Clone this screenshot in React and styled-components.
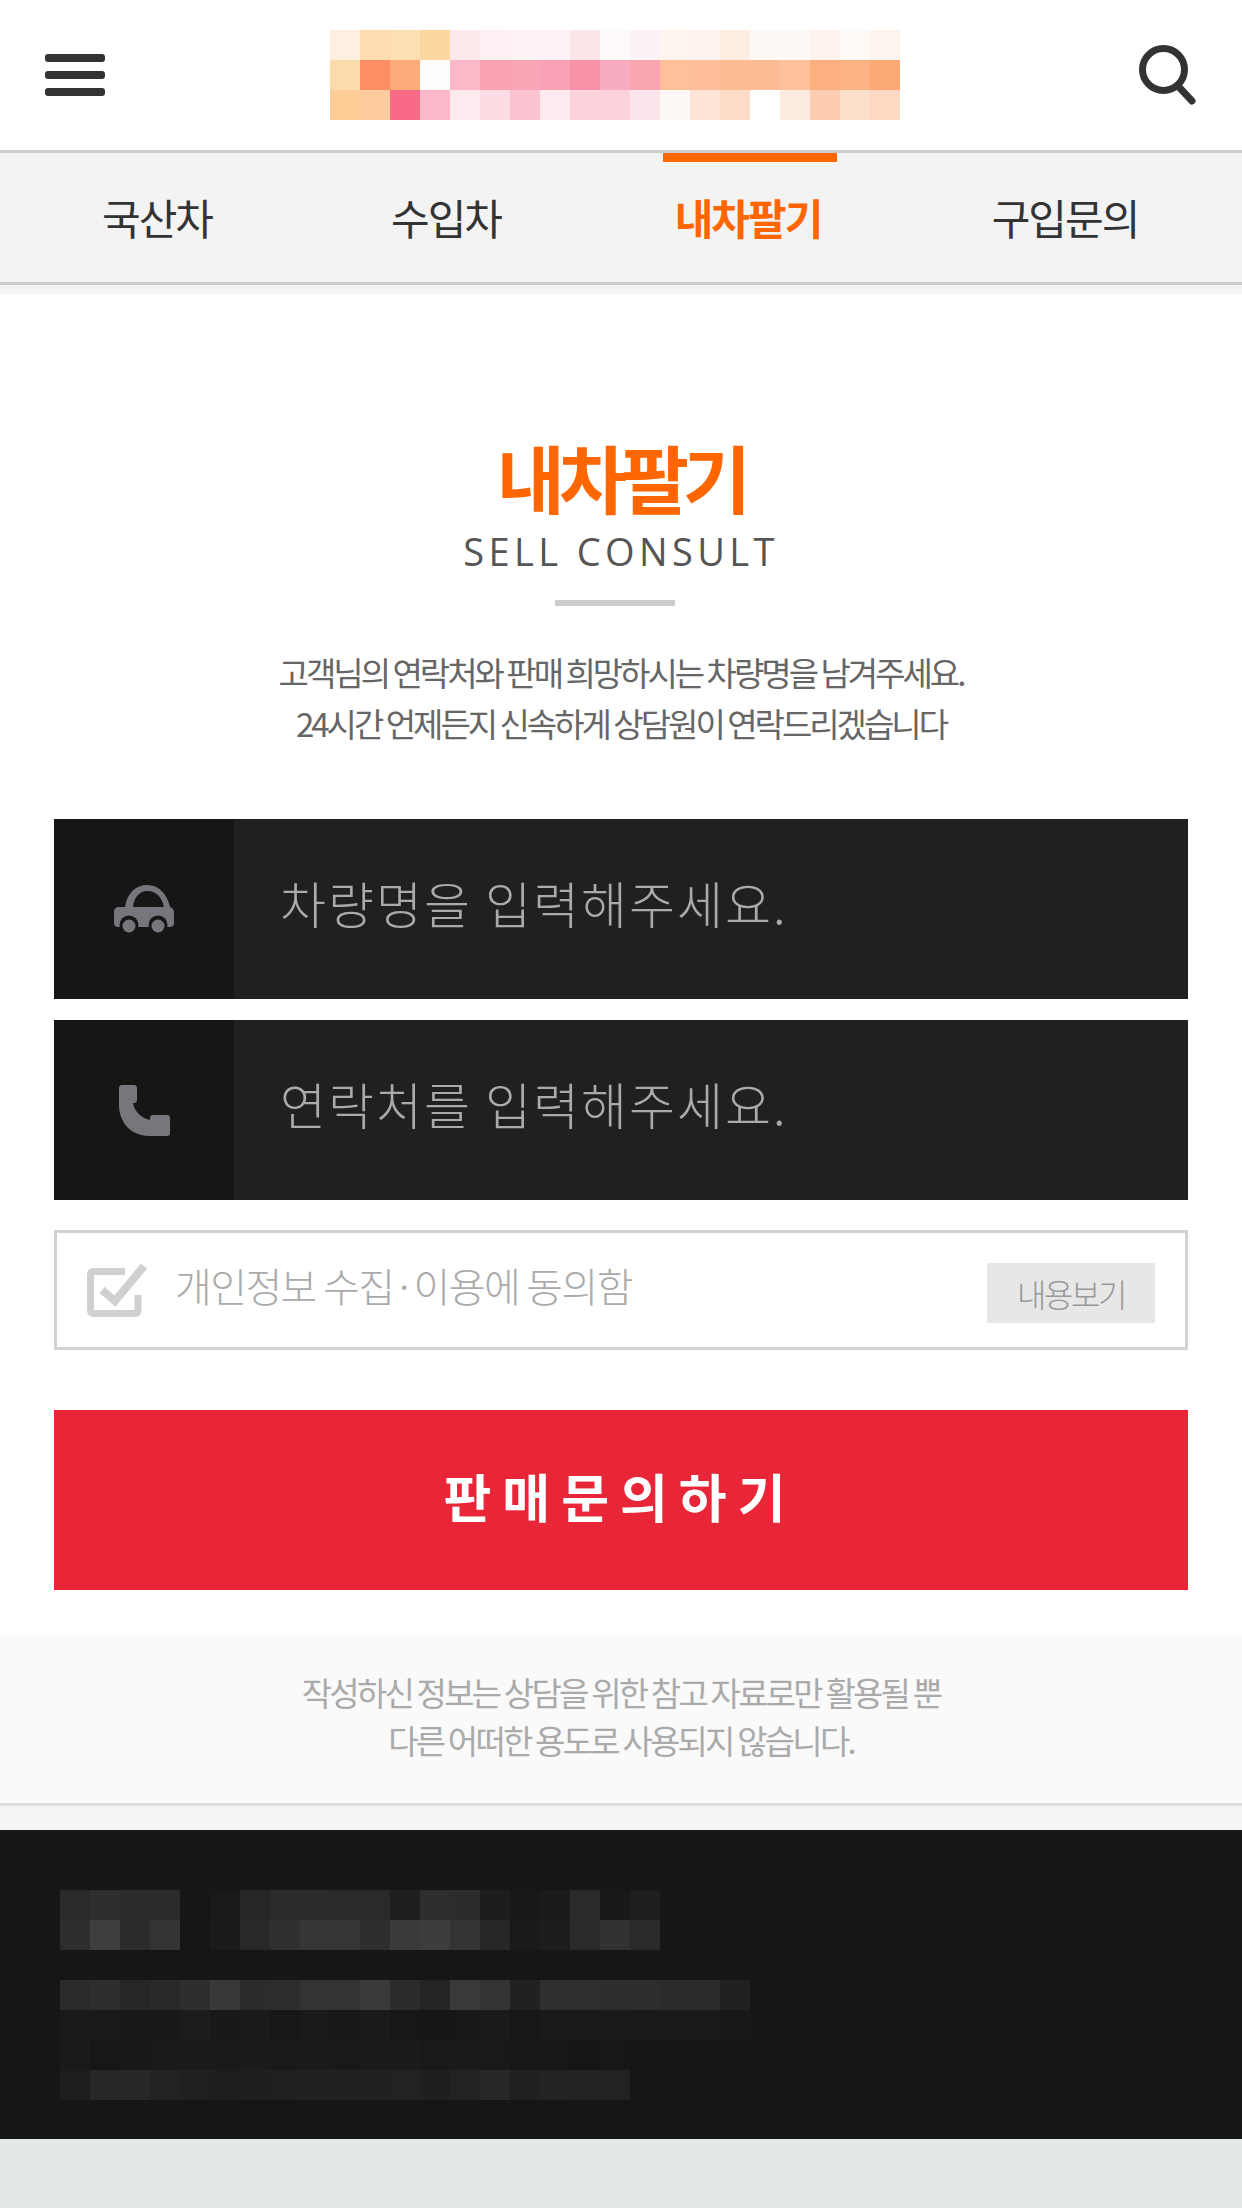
import React from "react";
import styled, { createGlobalStyle } from "styled-components";

const KR = `"Noto Sans CJK KR", "Noto Sans", sans-serif`;

const GlobalStyle = createGlobalStyle`
  html, body {
    margin: 0;
    padding: 0;
    background: #e4e8e9;
  }
  * {
    box-sizing: border-box;
  }
`;

const Page = styled.div`
  width: 1242px;
  min-height: 2208px;
  background: #e4e8e9;
  font-family: ${KR};
`;

const Header = styled.header`
  height: 153px;
  background: #fff;
  border-bottom: 3px solid #ccc;
  padding: 0 46px 0 45px;
  display: flex;
  align-items: center;
  justify-content: space-between;
`;

const MenuButton = styled.div`
  width: 60px;
  display: flex;
  flex-direction: column;
  gap: 9px;
  span {
    display: block;
    height: 8px;
    border-radius: 3px;
    background: #333;
  }
`;

const LogoWrap = styled.div`
  margin-right: 15px;
  display: flex;
`;

const Nav = styled.nav`
  height: 141px;
  background: #f3f3f3;
  padding-bottom: 12px;
  display: grid;
  grid-template-columns: 318px 260px 344px 290px;
  justify-items: center;
  position: relative;
  &::after {
    content: "";
    position: absolute;
    left: 0;
    right: 0;
    bottom: 9px;
    height: 3px;
    background: #ccc;
  }
`;

const NavItem = styled.a`
  height: 129px;
  padding: 0 16px 11px 12px;
  display: flex;
  align-items: center;
  font-size: 42px;
  letter-spacing: -2px;
  color: ${p => (p.$active ? "#ff6600" : "#333")};
  font-weight: ${p => (p.$active ? 700 : 400)};
  border-top: 9px solid ${p => (p.$active ? "#ff6600" : "transparent")};
`;

const Main = styled.main`
  background: #fff;
  padding: 146px 54px 45px;
`;

const Intro = styled.section`
  display: flex;
  flex-direction: column;
  align-items: center;
  text-align: center;
`;

const Title = styled.h1`
  margin: 0;
  font-size: 74px;
  line-height: 72px;
  font-weight: 700;
  letter-spacing: -6px;
  color: #ff6600;
`;

const SubTitle = styled.div`
  margin-top: 17px;
  font-family: "Open Sans", sans-serif;
  font-size: 38px;
  line-height: 44px;
  letter-spacing: 4.4px;
  color: #555;
`;

const Divider = styled.div`
  margin: 27px 12px 0 0;
  width: 120px;
  height: 6px;
  background: #ccc;
`;

const Description = styled.p`
  margin: 41px 0 0;
  font-size: 33px;
  line-height: 51px;
  letter-spacing: -3px;
  color: #666;
`;

const Form = styled.form`
  margin-top: 70px;
  display: flex;
  flex-direction: column;
`;

const Field = styled.label`
  height: 180px;
  display: flex;
  background: #202020;
  & + & {
    margin-top: 21px;
  }
`;

const FieldIcon = styled.div`
  width: 180px;
  flex: none;
  background: #161616;
  display: flex;
  align-items: center;
  justify-content: center;
`;

const FieldInput = styled.input`
  flex: 1;
  min-width: 0;
  border: 0;
  outline: 0;
  background: transparent;
  padding: 0 0 14px 46px;
  font-family: ${KR};
  font-size: 50px;
  font-weight: 300;
  letter-spacing: 2px;
  color: #aaa;
  &::placeholder {
    color: #aaa;
    opacity: 1;
  }
`;

const Agree = styled.div`
  margin-top: 30px;
  height: 120px;
  border: 3px solid #d2d2d2;
  padding: 0 30px 0 30px;
  display: flex;
  align-items: center;
  background: #fff;
`;

const AgreeText = styled.span`
  margin-left: 28px;
  flex: 1;
  padding-bottom: 10px;
  font-size: 40px;
  font-weight: 300;
  letter-spacing: -1.6px;
  color: #aaa;
`;

const ViewButton = styled.span`
  margin-top: 6px;
  width: 168px;
  height: 60px;
  background: #e7e7e7;
  display: flex;
  align-items: center;
  justify-content: center;
  font-size: 32px;
  font-weight: 300;
  letter-spacing: -2.4px;
  color: #999;
`;

const Submit = styled.button`
  margin-top: 60px;
  height: 180px;
  border: 0;
  background: #e92637;
  color: #fff;
  font-family: ${KR};
  font-size: 52px;
  font-weight: 700;
  letter-spacing: 11px;
  padding: 0 2px 10px 0;
`;

const Notice = styled.p`
  margin: 0;
  background: #fafafa;
  border-bottom: 3px solid #ddd;
  padding: 33px 0 39px;
  text-align: center;
  font-size: 33px;
  line-height: 48px;
  letter-spacing: -2.8px;
  color: #aaa;
`;

const NoticeGap = styled.div`
  height: 24px;
  background: #f5f5f5;
`;

const Footer = styled.footer`
  height: 309px;
  background: #161616;
  padding: 60px 60px 39px;
  display: flex;
  flex-direction: column;
  gap: 30px;
`;

const LOGO = [
  ["#fdf0e0","#fddcb0","#fddfb4","#fcd7a0","#fde8ec","#fdf0f2","#fef2f4","#fef2f4","#fce6ea","#fffafa","#fcf1f3","#fef5ef","#fef3ee","#fdede3","#fff9f5","#fff9f5","#fef3ef","#fffaf6","#fef4ee"],
  ["#fddaaa","#fd8d63","#fcab78","#fffdfb","#fbb9c7","#f9a2b4","#faa5b6","#faa2b5","#f992a8","#f9acbf","#f9a6b0","#febf9b","#febe99","#fdba93","#febc94","#fdc29c","#fcb080","#fdb284","#fca874"],
  ["#fecd98","#fecb9f","#f96a86","#fbb8c8","#feeaee","#fcdde3","#fcc4d0","#feeaef","#fcd2db","#fcd3dc","#fbe5ea","#fef9f5","#fee5d5","#fedcc8","#ffffff","#feebdf","#fccdb0","#fde0cc","#fdd9c2"],
];

const FOOT_TOP = [
  ["#2a2a2a","#2e2e2e","#2b2b2b","#2c2b2a","#161616","#191919","#262626","#2b2b2b","#2b2b2b","#2a2a2a","#2a2a2a","#201f1e","#2e2e2c","#2c2c2c","#1d1d1d","#181818","#1b1b1b","#2a2a2a","#181818","#1e1e1e"],
  ["#2e2e2e","#3e3e3e","#2c2c2c","#333333","#161616","#1b1b1b","#282828","#303030","#363636","#363636","#2e2e30","#3a3a3a","#3c3e3d","#343434","#262626","#1a1a1a","#1d1d1d","#2a2a2a","#323232","#2a2a2a"],
];

const FOOT_BOTTOM = [
  ["#282a2c","#2e2e2e","#262626","#282a29","#2e2e2e","#383838","#2c2c2c","#2d2d2d","#323335","#323433","#3a3a3a","#2c2c2a","#242424","#383a39","#343233","#212121","#2f2f2f","#2f2f2f","#2e2e30","#2e2e2e","#2b2b2b","#2b2b2b","#212121"],
  ["#191919","#191919","#181818","#181818","#1c1c1c","#181818","#1b1b1b","#171717","#1a1a1a","#181818","#1a1a1a","#171717","#161616","#171717","#1b1b1b","#171717","#1a1a1a","#1a1a1a","#1a1a1a","#191919","#191919","#191919","#181818"],
  ["#1a1a1a","#171717","#181818","#191919","#1a1a1a","#1a1a1a","#1b1b1b","#191919","#1a1a19","#191919","#1b1b1b","#1b1b1b","#191919","#1a1a19","#191918","#171717","#171717","#151515","#171717"],
  ["#1e1e1e","#272727","#272727","#222222","#20201f","#1e1e1e","#1f1f1f","#202020","#212120","#212121","#212121","#222222","#1f1f1f","#222222","#272727","#202020","#232323","#222221","#222222"],
];

// pixelated block, one rect per cell
function Mosaic({ rows, cell, height }) {
  const cols = Math.max(...rows.map(r => r.length));
  return (
    <svg
      width={cols * cell}
      height={rows.length * height}
      viewBox={`0 0 ${cols * cell} ${rows.length * height}`}
      shapeRendering="crispEdges"
      style={{ display: "block" }}
    >
      {rows.map((row, y) =>
        row.map((color, x) => (
          <rect key={`${x}-${y}`} x={x * cell} y={y * height} width={cell} height={height} fill={color} />
        ))
      )}
    </svg>
  );
}

const SearchIcon = () => (
  <svg width="57" height="60" viewBox="0 0 57 60" fill="none" stroke="#333" strokeWidth="7" strokeLinecap="round">
    <circle cx="24.5" cy="24.5" r="21" />
    <path d="M39 41 L53 56" />
  </svg>
);

const CarIcon = () => (
  <svg width="60" height="48" viewBox="0 0 60 48">
    <path
      fill="#75777c"
      fillRule="evenodd"
      d="M5 22H11C13 8 22 0 33 0C45 0 53 9 56 22C59 23 60 25 60 28V38C60 41 58 42 55 42H5C2 42 0 41 0 38V27C0 24 2 22 5 22ZM19 22H50C48 12 42 6 33 6C26 6 20 12 19 22Z"
    />
    <circle cx="15" cy="40" r="9.5" fill="#161616" />
    <circle cx="44" cy="40" r="9.5" fill="#161616" />
    <circle cx="15" cy="41" r="6.5" fill="#75777c" />
    <circle cx="44" cy="41" r="6.5" fill="#75777c" />
  </svg>
);

const PhoneIcon = () => (
  <svg width="51" height="51" viewBox="0 0 51 51">
    <path
      fill="#75777c"
      d="M3 0H15C17 0 18 1 18 3V15C18 17 17 18 15 18H14C15 26 22 33 31 35V33C31 31 32 30 34 30H48C50 30 51 31 51 33V48C51 50 50 51 48 51H30C12 51 0 37 0 20V3C0 1 1 0 3 0Z"
    />
  </svg>
);

const CheckIcon = () => (
  <svg width="60" height="54" viewBox="0 0 60 54" fill="none" stroke="#ced0d2" strokeWidth="7">
    <path d="M38 8.5H7Q3.5 8.5 3.5 12V47Q3.5 50.5 7 50.5H48Q51 50.5 51 47V32" />
    <path d="M15 27L28 38L57 3" strokeWidth="8" />
  </svg>
);

const menu = [
  { label: "국산차" },
  { label: "수입차" },
  { label: "내차팔기", active: true },
  { label: "구입문의" },
];

export default function App() {
  return (
    <Page>
      <GlobalStyle />
      <Header>
        <MenuButton>
          <span />
          <span />
          <span />
        </MenuButton>
        <LogoWrap>
          <Mosaic rows={LOGO} cell={30} height={30} />
        </LogoWrap>
        <SearchIcon />
      </Header>
      <Nav>
        {menu.map(item => (
          <NavItem key={item.label} $active={item.active}>{item.label}</NavItem>
        ))}
      </Nav>
      <Main>
        <Intro>
          <Title>내차팔기</Title>
          <SubTitle>SELL CONSULT</SubTitle>
          <Divider />
          <Description>
            고객님의 연락처와 판매 희망하시는 차량명을 남겨주세요.
            <br />
            24시간 언제든지 신속하게 상담원이 연락드리겠습니다
          </Description>
        </Intro>
        <Form>
          <Field>
            <FieldIcon><CarIcon /></FieldIcon>
            <FieldInput placeholder="차량명을 입력해주세요." />
          </Field>
          <Field>
            <FieldIcon><PhoneIcon /></FieldIcon>
            <FieldInput placeholder="연락처를 입력해주세요." />
          </Field>
          <Agree>
            <CheckIcon />
            <AgreeText>개인정보 수집·이용에 동의함</AgreeText>
            <ViewButton>내용보기</ViewButton>
          </Agree>
          <Submit type="button">판매문의하기</Submit>
        </Form>
      </Main>
      <Notice>
        작성하신 정보는 상담을 위한 참고 자료로만 활용될 뿐
        <br />
        다른 어떠한 용도로 사용되지 않습니다.
      </Notice>
      <NoticeGap />
      <Footer>
        <Mosaic rows={FOOT_TOP} cell={30} height={30} />
        <Mosaic rows={FOOT_BOTTOM} cell={30} height={30} />
      </Footer>
    </Page>
  );
}
